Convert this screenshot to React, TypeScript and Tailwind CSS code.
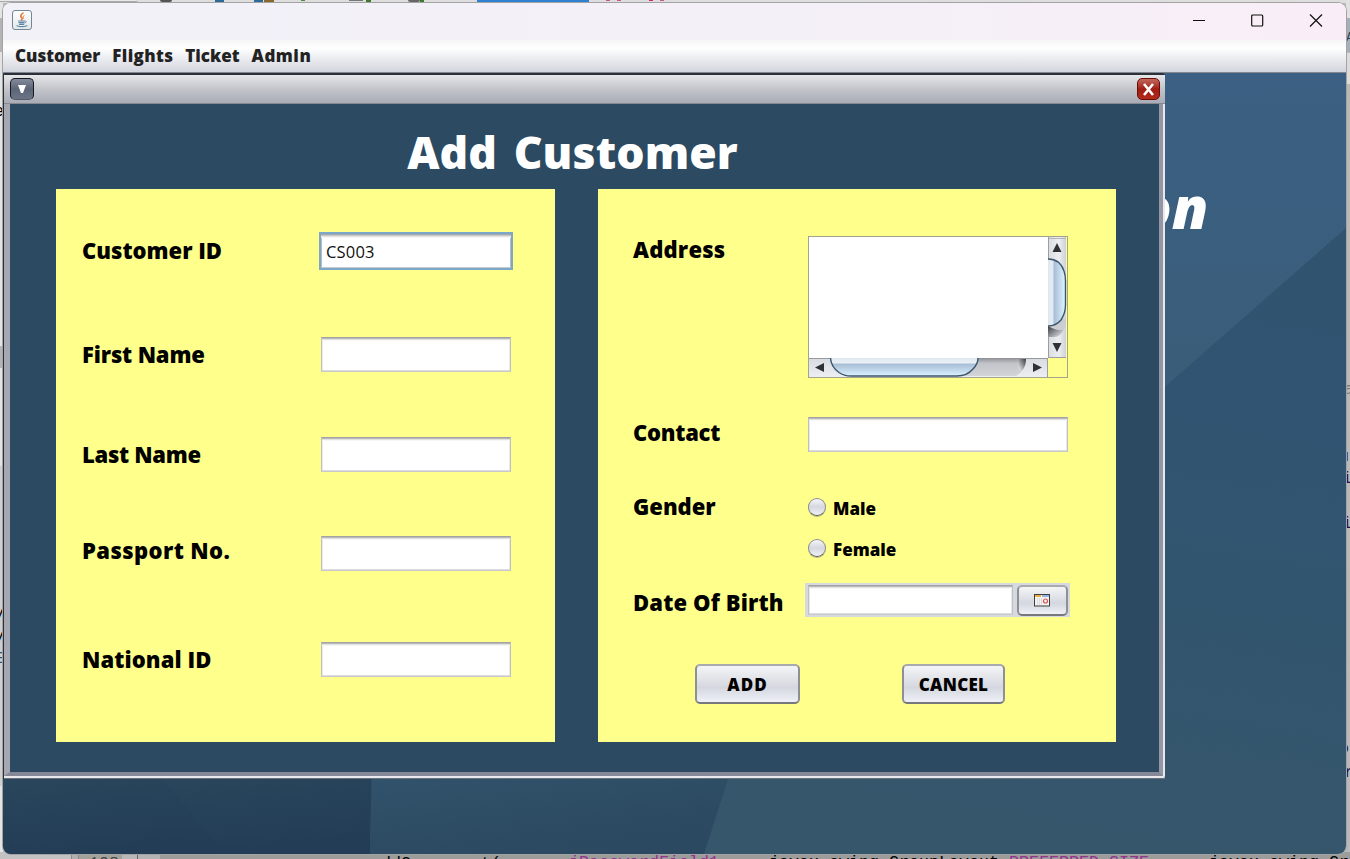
import type { ReactNode } from "react";

const customerFields = [
  { label: "Customer ID", value: "CS003", row: "mt-[44px]", text: "-mt-[3px]", focused: true },
  { label: "First Name", value: "", row: "mt-[68px]", text: "-mt-[3px] tracking-[-0.15px]", focused: false },
  { label: "Last Name", value: "", row: "mt-[64px]", text: "-mt-[3px] tracking-[-0.3px]", focused: false },
  { label: "Passport No.", value: "", row: "mt-[63px]", text: "-mt-[9px] tracking-[0.4px]", focused: false },
  { label: "National ID", value: "", row: "mt-[70px]", text: "-mt-[3px] tracking-[0.1px]", focused: false },
];

function Label({ children, className = "" }: { children: ReactNode; className?: string }) {
  return (
    <span className={`shrink-0 whitespace-nowrap text-[22px] leading-[26px] font-extrabold text-black ${className}`}>
      {children}
    </span>
  );
}

function Field({ value = "", className = "", focused = false }: { value?: string; className?: string; focused?: boolean }) {
  const plain =
    "border border-t-[#a3a3a3] border-x-[#bfc0c4] border-b-[#c9cacd] shadow-[inset_0_1px_0_#b9b9b9,inset_0_2px_0_#e2e2e2,inset_0_3px_0_#f7f7f7,inset_0_-1px_0_#dcdcdf,inset_1px_0_0_#e9e9ec,inset_-1px_0_0_#e9e9ec]";
  const ring =
    "border border-[#7ba7c8] outline-1 outline-[#7ba7c8] shadow-[inset_0_1px_0_#a5a9ad,inset_0_2px_0_#c8c8c8,inset_0_3px_0_#e3e3e3,inset_0_4px_0_#f6f6f6,inset_0_-1px_0_#c6cad0,inset_1px_0_0_#b6bcc4,inset_-1px_0_0_#b6bcc4]";
  return (
    <div className={`flex items-center bg-white pl-[5px] ${focused ? ring : plain} ${className}`}>
      <span className="pt-[2px] text-[16.5px] tracking-[0.2px] text-[#111] font-normal">{value}</span>
    </div>
  );
}

function NimbusButton({ children, className = "" }: { children: ReactNode; className?: string }) {
  return (
    <button
      className={`flex items-center justify-center rounded-[5px] border-2 border-x-[#8f9096] border-t-[#a9aaae] border-b-[#77787e] bg-linear-to-b from-[#f4f5f6] via-[#d4d7df] via-60% to-[#eff1f7] text-[17px] leading-none font-extrabold text-black ${className}`}
    >
      {children}
    </button>
  );
}

function Radio({ label }: { label: string }) {
  return (
    <div className="flex h-[27px] items-center">
      <span className="-mt-[1px] mr-[7px] size-[18px] rounded-full border border-[#8b8d92] border-b-[#5e6066] bg-linear-to-b from-[#f6f6f8] via-[#d5d8df] to-[#f1f2f7] shadow-[0_1px_0_#b9b97a]" />
      <span className="pt-[2px] text-[17px] leading-none font-extrabold">{label}</span>
    </div>
  );
}

function VerticalScroll() {
  return (
    <svg width="19" height="121" viewBox="0 0 19 121" className="block">
      <defs>
        <linearGradient id="vTrack" x1="0" x2="1" y1="0" y2="0">
          <stop offset="0" stopColor="#d8dbe0" />
          <stop offset="0.6" stopColor="#eceef1" />
          <stop offset="1" stopColor="#cfd1d8" />
        </linearGradient>
        <linearGradient id="vThumb" x1="0" x2="1" y1="0" y2="0">
          <stop offset="0" stopColor="#dfe7ef" />
          <stop offset="0.25" stopColor="#e6edf4" />
          <stop offset="0.36" stopColor="#a9bfd6" />
          <stop offset="0.85" stopColor="#d3e9f8" />
          <stop offset="1" stopColor="#dff3fc" />
        </linearGradient>
        <linearGradient id="vShade" x1="0" x2="1" y1="0" y2="1">
          <stop offset="0" stopColor="#37393e" />
          <stop offset="0.8" stopColor="#c8c9ce" />
        </linearGradient>
      </defs>
      <rect width="18" height="121" fill="url(#vTrack)" />
      <rect y="1" width="18" height="1" fill="#b4b6bb" />
      <rect width="1" height="121" fill="#9b9da3" />
      <path d="M9 6 L13.5 15 H4.5Z" fill="#2f3135" />
      <path d="M0 82 H18 V88 Q14 99 8 100 H0Z" fill="#cccdd1" />
      <path d="M0 89 Q8 94 15 93 Q12 99 6 100 H0Z" fill="url(#vShade)" />
      <path d="M0 22 Q12 22 16 34 Q17.5 38 17.5 44 V68 Q17.5 76 13 83 Q8 89 0 89Z" fill="url(#vThumb)" />
      <path d="M0 22 Q12 22 16 34 Q17.5 38 17.5 44 V68 Q17.5 76 13 83 Q8 89 0 89" fill="none" stroke="#3c566c" strokeWidth="1.4" />
      <path d="M9 115 L13.5 106 H4.5Z" fill="#2f3135" />
      <rect y="120" width="18" height="1" fill="#9b9da3" />
    </svg>
  );
}

function HorizontalScroll() {
  return (
    <svg width="239" height="19" viewBox="0 0 239 19" className="block">
      <defs>
        <linearGradient id="hTrack" x1="0" x2="0" y1="0" y2="1">
          <stop offset="0" stopColor="#d8dbe0" />
          <stop offset="1" stopColor="#eceef4" />
        </linearGradient>
        <linearGradient id="hGroove" x1="0" x2="0" y1="0" y2="1">
          <stop offset="0" stopColor="#8f9095" />
          <stop offset="0.3" stopColor="#c3c4c9" />
          <stop offset="1" stopColor="#d3d4d8" />
        </linearGradient>
        <linearGradient id="hThumb" x1="0" x2="0" y1="0" y2="1">
          <stop offset="0" stopColor="#dfe7ef" />
          <stop offset="0.25" stopColor="#e9eff5" />
          <stop offset="0.36" stopColor="#a9bfd6" />
          <stop offset="0.85" stopColor="#cfe6f6" />
          <stop offset="1" stopColor="#dff3fc" />
        </linearGradient>
        <linearGradient id="hShade" x1="0" x2="1" y1="1" y2="0">
          <stop offset="0.35" stopColor="#cfd0d4" />
          <stop offset="1" stopColor="#35373c" />
        </linearGradient>
      </defs>
      <rect width="239" height="19" fill="url(#hTrack)" />
      <rect width="239" height="1" fill="#96989e" />
      <path d="M21 0 H217 Q217 12 207 18 H38 Q22 13 21 0Z" fill="url(#hGroove)" />
      <path d="M208 1 H217 Q217 11 209 16Z" fill="url(#hShade)" />
      <path d="M21.5 0 Q22 9 30 14.5 Q35 18 42 18 H148 Q158 18 164 11 Q169 6 169 0Z" fill="url(#hThumb)" />
      <path d="M21.5 0 Q22 9 30 14.5 Q35 18 42 18 H148 Q158 18 164 11 Q169 6 169 0" fill="none" stroke="#3c566c" strokeWidth="1.4" />
      <path d="M6 9.5 L15 5 V14Z" fill="#2f3135" />
      <path d="M233 9.5 L224 5 V14Z" fill="#2f3135" />
      <rect x="238" width="1" height="19" fill="#9b9da3" />
    </svg>
  );
}

function Wallpaper() {
  return (
    <svg width="1343" height="781" viewBox="3 73 1343 781" className="absolute inset-0 block">
      <defs>
        <linearGradient id="skyTop" x1="0" x2="0" y1="0" y2="1">
          <stop offset="0" stopColor="#3b6083" />
          <stop offset="1" stopColor="#3a5d79" />
        </linearGradient>
        <linearGradient id="skyLow" gradientUnits="userSpaceOnUse" x1="1346" y1="230" x2="1240" y2="854">
          <stop offset="0" stopColor="#30536e" />
          <stop offset="0.25" stopColor="#315473" />
          <stop offset="0.65" stopColor="#32556e" />
          <stop offset="1" stopColor="#36566c" />
        </linearGradient>
        <linearGradient id="slabA" x1="0" x2="0.3" y1="0" y2="1">
          <stop offset="0" stopColor="#29475d" />
          <stop offset="1" stopColor="#233d56" />
        </linearGradient>
        <linearGradient id="slabB" x1="0" x2="0.6" y1="0" y2="1">
          <stop offset="0" stopColor="#31536b" />
          <stop offset="1" stopColor="#2b4961" />
        </linearGradient>
      </defs>
      <rect x="3" y="73" width="1343" height="781" fill="url(#skyLow)" />
      <path d="M1100 73 H1346 V228 L1160 391 H1100Z" fill="url(#skyTop)" />
      <path d="M3 770 H240 V854 H3Z" fill="url(#slabA)" />
      <path d="M156 770 H372 L370 854 H225Z" fill="url(#slabA)" />
      <path d="M372 770 H731 L704 854 H370Z" fill="url(#slabB)" />
    </svg>
  );
}

function EditorBehind() {
  return (
    <div className="absolute inset-0 overflow-hidden bg-[#b9b9b9] font-['Liberation_Mono',monospace] text-[16.67px] leading-none">
      <div className="absolute top-0 left-0 h-[3px] w-full bg-[#dedede]" />
      <div className="absolute top-0 left-0 h-[2px] w-[138px] rounded-br border-b border-[#aaa] bg-[#e9e9e9]" />
      <div className="absolute top-0 left-[160px] h-[2px] w-[12px] rounded-b-full bg-[#555]" />
      <div className="absolute top-0 left-[215px] h-[2px] w-[9px] bg-[#2c6a98]" />
      <div className="absolute top-0 left-[254px] h-[2px] w-[9px] bg-[#2c6a98]" />
      <div className="absolute top-0 left-[264px] h-[2px] w-[10px] bg-[#8a672a]" />
      <div className="absolute top-0 left-[301px] h-[1px] w-[4px] bg-[#4e8a3c]" />
      <div className="absolute top-0 left-[349px] h-[1px] w-[14px] bg-[#777]" />
      <div className="absolute top-0 left-[366px] h-[2px] w-[5px] bg-[#3c7a2c]" />
      <div className="absolute top-0 left-[408px] h-[2px] w-[12px] rounded-b-full bg-[#666]" />
      <div className="absolute top-0 left-[420px] h-[2px] w-[4px] bg-[#3c7a2c]" />
      <div className="absolute top-0 left-[477px] h-[3px] w-[112px] bg-[#2f80d0]" />
      <div className="absolute top-0 left-[606px] h-[1px] w-[4px] bg-[#c45a8c]" />
      <div className="absolute top-0 left-[617px] h-[1px] w-[4px] bg-[#c45a8c]" />
      <div className="absolute top-0 left-[649px] h-[1px] w-[4px] bg-[#d22a6c]" />
      <div className="absolute top-0 left-[660px] h-[1px] w-[4px] bg-[#c45a8c]" />

      <div className="absolute top-[3px] left-0 h-[856px] w-[3px] bg-[#e4e4e2]" />
      <div className="absolute top-[18px] left-0 h-[34px] w-[3px] bg-[#b4b4b4]" />
      <div className="absolute top-[346px] left-0 h-[22px] w-[3px] bg-[#b4b4b4]" />
      <div className="absolute top-[466px] left-0 h-[320px] w-[3px] bg-[#cfcfcf]" />
      <span className="absolute top-[104px] left-[-6px] text-black">e</span>
      <span className="absolute top-[606px] left-[-6px] text-black">y</span>
      <span className="absolute top-[629px] left-[-6px] text-black">y</span>
      <span className="absolute top-[651px] left-[-5px] text-[#28507c]">E</span>

      <div className="absolute top-0 left-[1346px] h-[18px] w-1 bg-[#e2e2e2]" />
      <div className="absolute top-[18px] left-[1346px] h-[34px] w-1 bg-[#a5b0bb]" />
      <div className="absolute top-[53px] left-[1346px] h-[31px] w-1 bg-[#dcdcdc]" />
      <span className="absolute top-[31px] left-[1346px] text-[13px] text-[#345]">A</span>
      <span className="absolute top-[382px] left-[1344px] text-[#777]">a</span>
      <span className="absolute top-[449px] left-[1339px] text-[#214]">u</span>
      <span className="absolute top-[471px] left-[1342px] text-[#214]">i</span>
      <span className="absolute top-[516px] left-[1342px] text-[#214]">i</span>
      <span className="absolute top-[741px] left-[1339px] text-[#214]">o</span>
      <span className="absolute top-[765px] left-[1344px] text-[#214]">r</span>

      <div className="absolute top-[852px] left-0 flex h-[7px] w-full bg-[#9c9c9a]">
        <div className="w-[71px] bg-[#c3c3c3]" />
        <div className="w-[8px] border-x border-[#8a8a8a] bg-[#b0b0b0]" />
        <div className="w-[43px] bg-[#a2a29a]" />
        <div className="w-[16px] border-r border-[#666] bg-[#b8b8b8]" />
        <div className="w-[22px] bg-[#b4b4b4]" />
      </div>
      <span className="absolute top-[856px] left-[89px] text-[#444]">108</span>
      <span className="absolute top-[856px] left-[361px] text-black">.addComponent(</span>
      <span className="absolute top-[855px] left-[569px] text-[#93338b]">jPasswordField1</span>
      <span className="absolute top-[855px] left-[769px] text-black">javax.swing.GroupLayout.</span>
      <span className="absolute top-[855px] left-[1009px] text-[#93338b]">PREFERRED_SIZE</span>
      <span className="absolute top-[855px] left-[1209px] text-black">javax.swing.GroupLayout</span>
    </div>
  );
}

function CustomerFrame() {
  return (
    <section className="relative flex h-[706px] w-[1162px] flex-col rounded-t-[3px] rounded-br-[2px] border-[#2c3038] border-t-2 border-l bg-[#e8e9ee] pr-[2px] pb-[3px] shadow-[inset_0_-1px_0_#6c6f78]">
      <div className="flex h-[29px] w-[1161px] shrink-0 items-center justify-between border-b border-[#86898f] bg-linear-to-b from-[#e6e7ea] via-[#c3c5cb] to-[#a9acb7] pr-[5px] pl-[6px]">
        <div className="flex h-[22px] w-6 items-center justify-center rounded-[5px] border border-[#15181f] border-b-[#555b69] bg-linear-to-b from-[#858c9b] via-[#5c6577] to-[#6b7485]">
          <svg width="10" height="10" viewBox="0 0 10 10">
            <path d="M1 1 H9 L6 9 H4Z" fill="#fff" />
          </svg>
        </div>
        <div className="flex h-[22px] w-[23px] items-center justify-center rounded-[5px] border border-[#6d0d06] bg-linear-to-b from-[#c1675f] via-[#a01d12] via-50% to-[#b22a1c]">
          <svg width="13" height="13" viewBox="0 0 13 13">
            <path d="M2 1 L11 12 M11 1 L2 12" stroke="#fff" strokeWidth="2.6" />
          </svg>
        </div>
      </div>

      <div className="flex grow flex-col border-r-[4px] border-b-[4px] border-l-[6px] border-r-[#9497a3] border-b-[#858896] border-l-[#a5a8b2] bg-[#2c4a61]">
        <h1 className="mt-[17px] pr-[24px] text-center text-[44.5px] leading-[61px] font-extrabold tracking-[0.1px] [word-spacing:5px] text-white">
          Add Customer
        </h1>
        <div className="mt-[7px] flex gap-[43px] pl-[46px]">
          <div className="flex h-[553px] w-[499px] shrink-0 flex-col bg-[#ffff8c] pl-[26px]">
            {customerFields.map((f) => (
              <div key={f.label} className={`flex h-[36px] items-center ${f.row}`}>
                <Label className={`w-[239px] ${f.text}`}>{f.label}</Label>
                <Field value={f.value} focused={f.focused} className={f.focused ? "-ml-[1px] h-[36px] w-[192px]" : "h-[35px] w-[190px] self-start"} />
              </div>
            ))}
          </div>

          <div className="flex h-[553px] w-[518px] shrink-0 flex-col bg-[#ffff8c] pl-[35px]">
            <div className="mt-[47px] flex h-[142px]">
              <Label className="w-[175px] tracking-[0.2px]">Address</Label>
              <div className="grid h-[142px] w-[260px] grid-cols-[239px_19px] grid-rows-[121px_19px] border border-[#a2a48c]">
                <div className="bg-white" />
                <VerticalScroll />
                <HorizontalScroll />
              </div>
            </div>

            <div className="mt-[39px] flex h-[35px] items-center">
              <Label className="-mt-[6px] w-[175px] tracking-[-0.25px]">Contact</Label>
              <Field className="h-[35px] w-[260px]" />
            </div>

            <div className="mt-[42px] flex">
              <Label className="-mt-[1px] w-[175px]">Gender</Label>
              <div className="flex flex-col gap-[14px]">
                <Radio label="Male" />
                <Radio label="Female" />
              </div>
            </div>

            <div className="mt-[21px] flex h-[34px] items-center">
              <Label className="mt-[4px] w-[172px] tracking-[0.15px]">Date Of Birth</Label>
              <div className="flex h-[34px] w-[265px] items-center justify-between bg-[#d6d9df] pr-[2px] pl-[3px]">
                <Field className="h-[30px] w-[205px]" />
                <NimbusButton className="h-[31px] w-[51px]">
                  <svg width="17" height="13" viewBox="0 0 17 13">
                    <rect x="0.5" y="0.5" width="15" height="11.5" fill="#f3f3f3" stroke="#3d3d3d" />
                    <rect x="1" y="1" width="6" height="2" fill="#eeb03c" />
                    <rect x="8" y="1" width="7" height="2" fill="#8fb4e6" />
                    <path d="M3.5 4 V11 M5.5 4 V11 M7.5 4 V11" stroke="#ddd" />
                    <circle cx="11.5" cy="7" r="2" fill="none" stroke="#e25555" strokeWidth="1.2" />
                  </svg>
                </NimbusButton>
              </div>
            </div>

            <div className="mt-[47px] flex gap-[102px] pl-[62px]">
              <NimbusButton className="h-[40px] w-[105px] tracking-[1px]">ADD</NimbusButton>
              <NimbusButton className="h-[40px] w-[103px] tracking-[0.3px]">CANCEL</NimbusButton>
            </div>
          </div>
        </div>
      </div>
    </section>
  );
}

export default function App() {
  return (
    <div className="relative h-[859px] w-[1350px] overflow-hidden font-['Open_Sans','Noto_Sans',sans-serif]">
      <EditorBehind />
      <div className="absolute top-[2px] left-[2px] flex h-[853px] w-[1345px] flex-col overflow-hidden rounded-[9px] border border-[#a3a3a3] bg-white">
        <header className="flex h-[37px] shrink-0 items-center justify-between bg-linear-to-r from-[#f2f1f8] via-[#f4f0f8] via-60% to-[#f9eef7] pr-[23px] pl-[9px]">
          <div className="-mt-[3px] flex size-[20px] items-center justify-center rounded-[3px] border border-[#6f8797] bg-linear-to-b from-white to-[#e3e7e8]">
            <svg width="14" height="16" viewBox="0 0 14 16" fill="none" strokeLinecap="round">
              <path d="M8 1 Q5 3 6 5 Q8 6 6.5 8" stroke="#e2702b" strokeWidth="1.5" />
              <path d="M9 3.5 Q7.5 5 8.5 6.5" stroke="#ef9a5d" />
              <path d="M3.5 9 H9.5 M4 10.7 H9 M4.5 12.4 H8.7" stroke="#5b86a5" strokeWidth="1.2" />
              <path d="M10.5 8.7 Q12.5 9.5 10 11" stroke="#5b86a5" />
              <path d="M2 13.8 Q6.5 15.6 12 13.8" stroke="#5b86a5" strokeWidth="1.2" />
            </svg>
          </div>
          <div className="-mt-[2px] flex items-center gap-[45px]">
            <svg width="13" height="13" viewBox="0 0 13 13">
              <path d="M0 6.5 H12" stroke="#111" />
            </svg>
            <svg width="13" height="13" viewBox="0 0 13 13" fill="none">
              <rect x="0.7" y="1" width="11" height="11" rx="1" stroke="#111" strokeWidth="1.2" />
            </svg>
            <svg width="14" height="13" viewBox="0 0 14 13" fill="none">
              <path d="M1 0.5 L13 12.5 M13 0.5 L1 12.5" stroke="#111" strokeWidth="1.2" />
            </svg>
          </div>
        </header>
        <nav className="flex h-[33px] shrink-0 items-center gap-[12px] border-b border-[#82868f] bg-linear-to-b from-[#f6f6f8] via-white via-25% to-[#d2d5dd] pb-[2px] pl-[12px] text-[17px] leading-none font-extrabold text-[#222]">
          <span>Customer</span>
          <span className="tracking-[0.35px]">Flights</span>
          <span>Ticket</span>
          <span className="tracking-[0.5px]">Admin</span>
        </nav>
        <main className="relative grow">
          <Wallpaper />
          <div className="absolute top-[94px] left-[1133px] text-[59px] leading-[78px] font-extrabold text-white italic">on</div>
          <CustomerFrame />
        </main>
      </div>
    </div>
  );
}
